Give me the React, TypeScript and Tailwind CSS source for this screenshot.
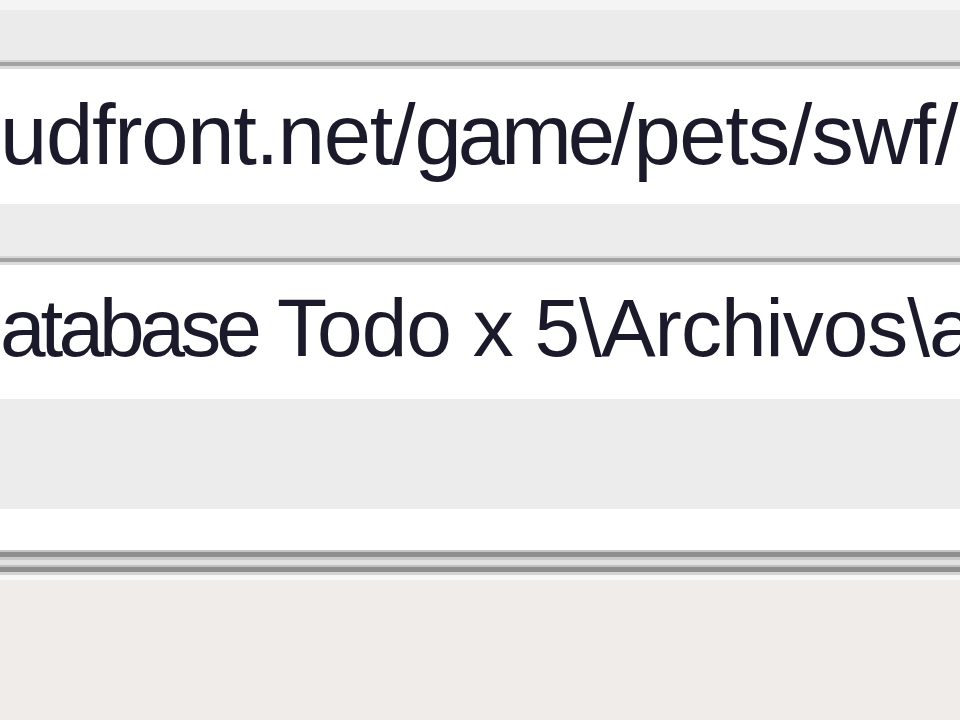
export default function App() {
  return (
    <div className="flex h-[720px] w-[960px] flex-col overflow-hidden bg-[#efecea] font-['Liberation_Sans',Arial,sans-serif] text-[#1a1a2a]">
      <div className="h-[10px] bg-[#f4f4f4]" />
      <div className="h-[50px] bg-[#ebebeb]" />
      <EdgeLine />
      <div className="h-[135px] overflow-hidden whitespace-nowrap bg-white pt-[24px]">
        <p className="text-[85px] leading-[84px] tracking-[-1.3px] blur-[0.6px]">
          udfront.net/<span className="tracking-[-4px]">game</span>/pets/swf/
        </p>
      </div>
      <div className="h-[52px] bg-[#ececec]" />
      <EdgeLine />
      <div className="h-[134px] overflow-hidden whitespace-nowrap bg-white pt-[21px]">
        <p className="text-[82px] leading-[84px] tracking-[-1px] blur-[0.6px]">
          <span className="tracking-[-5px]">atabase</span> Todo x 5\Archivos\a
        </p>
      </div>
      <div className="h-[110px] bg-[#ececec]" />
      <div className="h-[41px] bg-white" />
      <div className="h-[2px] bg-[#c4c4c4]" />
      <div className="h-[5px] bg-[#8e8e8e]" />
      <div className="h-[3px] bg-[#c8c8c8]" />
      <div className="h-[5px] bg-[#e2e2e2]" />
      <div className="h-[2px] bg-[#c0c0c0]" />
      <div className="h-[5px] bg-[#8e8e8e]" />
      <div className="h-[3px] bg-[#d4d4d4]" />
      <div className="h-[5px] bg-[#f8f8f8]" />
      <div className="flex-1 bg-[#efecea]" />
    </div>
  );
}

function EdgeLine() {
  return (
    <div className="flex flex-col">
      <div className="h-[2px] bg-[#d6d6d6]" />
      <div className="h-[4px] bg-[#a2a2a2]" />
      <div className="h-[3px] bg-[#dcdcdc]" />
    </div>
  );
}
